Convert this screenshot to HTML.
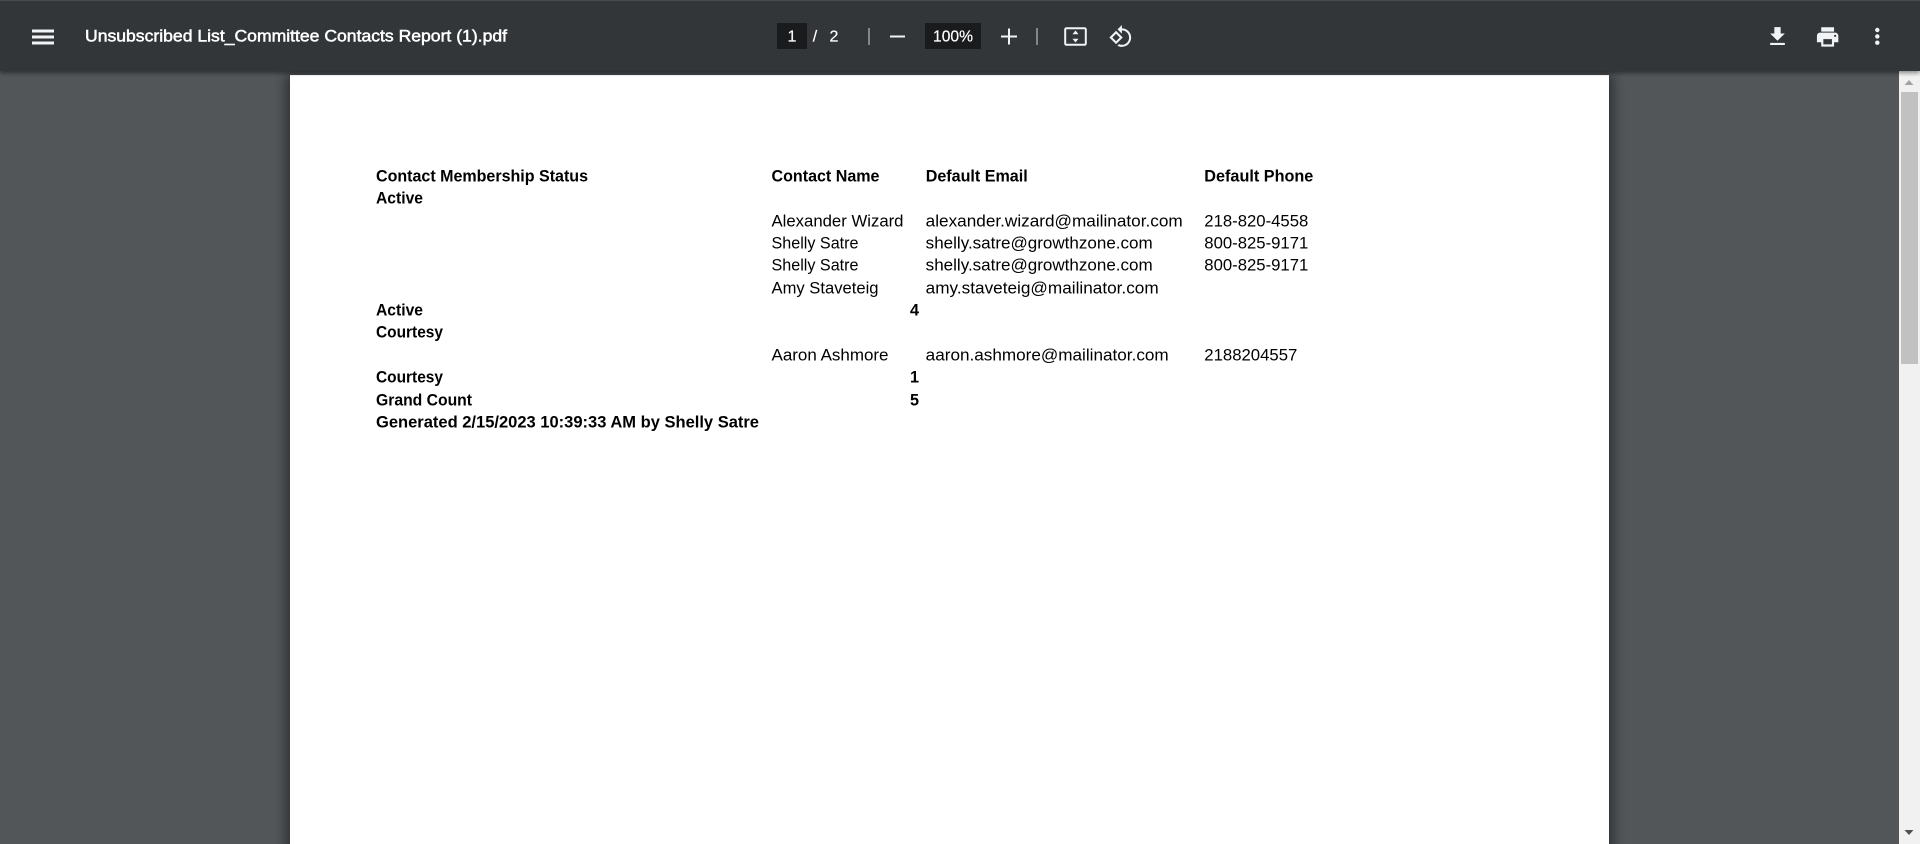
<!DOCTYPE html>
<html><head><meta charset="utf-8"><title>Unsubscribed List_Committee Contacts Report (1).pdf</title>
<style>
html,body{margin:0;padding:0;width:1920px;height:844px;overflow:hidden;background:#525659}
svg{position:absolute;left:0;top:0;display:block}
.d{font-family:"Liberation Sans",sans-serif;font-size:16.2px;fill:#000}
.b{font-weight:bold}
.t{font-family:"Liberation Sans",sans-serif;fill:#fff}
</style></head><body>
<svg width="1920" height="844" viewBox="0 0 1920 844" xmlns="http://www.w3.org/2000/svg">
<defs>
<filter id="ps" x="-5%" y="-5%" width="110%" height="110%"><feGaussianBlur stdDeviation="6"/></filter>
<filter id="ts" x="-5%" y="-50%" width="110%" height="200%"><feGaussianBlur stdDeviation="2.5"/></filter>
</defs>
<rect width="1920" height="844" fill="#525659"/>
<rect x="286" y="75" width="1327" height="800" fill="#000" opacity=".45" filter="url(#ps)"/>
<rect x="290" y="75" width="1319" height="769" fill="#fff"/>
<!-- scrollbar -->
<rect x="1899" y="71" width="21" height="773" fill="#f1f1f1"/>
<rect x="1901" y="92" width="17" height="272" fill="#c1c1c1"/>
<path d="M1904.5 85h9l-4.5-5z" fill="#a3a3a3"/>
<path d="M1904.5 830h9l-4.500 5z" fill="#505050"/>
<!-- toolbar -->
<rect x="0" y="66" width="1920" height="7" fill="#000" opacity=".45" filter="url(#ts)"/>
<rect width="1920" height="71" fill="#323639"/>
<rect width="1920" height="1" fill="#4b4b4b"/>
<path d="M32 29.500h22v3H32zM32 35.500h22v3H32zM32 41.500h22v3H32z" fill="#f1f3f4"/>
<text class="t" x="85" y="41.500" font-size="16.500px" stroke="#fff" stroke-width=".5" textLength="422" lengthAdjust="spacingAndGlyphs">Unsubscribed List_Committee Contacts Report (1).pdf</text>
<rect x="777" y="23" width="30" height="26" fill="#191b1c"/>
<text class="t" x="792" y="41.500" font-size="16px" stroke="#fff" stroke-width=".2" text-anchor="middle">1</text>
<text class="t" x="815" y="41.500" font-size="16px" stroke="#fff" stroke-width=".2" text-anchor="middle">/</text>
<text class="t" x="834" y="41.500" font-size="16px" stroke="#fff" stroke-width=".2" text-anchor="middle">2</text>
<rect x="868" y="28" width="2" height="17" fill="#80868b"/>
<rect x="890" y="35.500" width="15" height="2" fill="#f1f3f4"/>
<rect x="925" y="23" width="56" height="26" fill="#191b1c"/>
<text class="t" x="933" y="41.500" font-size="16px" stroke="#fff" stroke-width=".2" textLength="40" lengthAdjust="spacingAndGlyphs">100%</text>
<path d="M1001 35.500h7v-7h2v7h7v2h-7v7h-2v-7h-7z" fill="#f1f3f4"/>
<rect x="1036" y="28" width="2" height="17" fill="#80868b"/>
<!-- fit -->
<rect x="1065.200" y="28.200" width="20.600" height="16.600" rx="1.200" fill="none" stroke="#f1f3f4" stroke-width="2"/>
<path d="M1075.500 30.500l3 3.800h-6zM1075.500 42.500l3-3.800h-6z" fill="#f1f3f4"/>
<!-- rotate -->
<g transform="translate(1108.500 24.200) scale(1.03)" fill="#f1f3f4"><path d="M7.340 6.410L.86 12.900l6.490 6.480 6.490-6.480-6.500-6.490zM3.690 12.900l3.660-3.660L11 12.900l-3.660 3.660-3.650-3.660zm15.670-6.260C17.610 4.880 15.300 4 13 4V.76L8.760 5 13 9.240V6c1.790 0 3.580.68 4.950 2.050 2.730 2.730 2.730 7.170 0 9.900C16.580 19.320 14.790 20 13 20c-.97 0-1.940-.21-2.840-.61l-1.490 1.490C10.020 21.620 11.510 22 13 22c2.300 0 4.610-.88 6.360-2.640 3.520-3.510 3.520-9.210 0-12.720z"/></g>
<!-- download -->
<g transform="translate(1764.900 24) scale(1.050)" fill="#f1f3f4"><path d="M19 9h-4V3H9v6H5l7 7 7-7zM5 18v2h14v-2H5z"/></g>
<!-- print -->
<g transform="translate(1814.800 24.100) scale(1.070)" fill="#f1f3f4"><path d="M19 8H5c-1.660 0-3 1.340-3 3v6h4v4h12v-4h4v-6c0-1.660-1.340-3-3-3zm-3 11H8v-5h8v5zm3-7c-.55 0-1-.45-1-1s.45-1 1-1 1 .45 1 1-.45 1-1 1zm-1-9H6v4h12V3z"/></g>
<!-- more -->
<g fill="#f1f3f4"><circle cx="1877.300" cy="30" r="2.200"/><circle cx="1877.300" cy="36.400" r="2.200"/><circle cx="1877.300" cy="42.700" r="2.200"/></g>
<!-- document -->
<g class="d">
<text class="d b" x="376" y="181.700" textLength="212" lengthAdjust="spacingAndGlyphs">Contact Membership Status</text>
<text class="d b" x="771.500" y="181.700" textLength="108" lengthAdjust="spacingAndGlyphs">Contact Name</text>
<text class="d b" x="925.700" y="181.700" textLength="102" lengthAdjust="spacingAndGlyphs">Default Email</text>
<text class="d b" x="1204.300" y="181.700" textLength="109" lengthAdjust="spacingAndGlyphs">Default Phone</text>
<text class="d b" x="376" y="203.700" textLength="47" lengthAdjust="spacingAndGlyphs">Active</text>
<text class="d" x="771.500" y="226.400" textLength="132" lengthAdjust="spacingAndGlyphs">Alexander Wizard</text>
<text class="d" x="925.700" y="226.400" textLength="257" lengthAdjust="spacingAndGlyphs">alexander.wizard@mailinator.com</text>
<text class="d" x="1204.300" y="226.400" textLength="104" lengthAdjust="spacingAndGlyphs">218-820-4558</text>
<text class="d" x="771.500" y="248.700" textLength="87" lengthAdjust="spacingAndGlyphs">Shelly Satre</text>
<text class="d" x="925.700" y="248.700" textLength="227" lengthAdjust="spacingAndGlyphs">shelly.satre@growthzone.com</text>
<text class="d" x="1204.300" y="248.700" textLength="104" lengthAdjust="spacingAndGlyphs">800-825-9171</text>
<text class="d" x="771.500" y="270.700" textLength="87" lengthAdjust="spacingAndGlyphs">Shelly Satre</text>
<text class="d" x="925.700" y="270.700" textLength="227" lengthAdjust="spacingAndGlyphs">shelly.satre@growthzone.com</text>
<text class="d" x="1204.300" y="270.700" textLength="104" lengthAdjust="spacingAndGlyphs">800-825-9171</text>
<text class="d" x="771.500" y="293.700" textLength="107" lengthAdjust="spacingAndGlyphs">Amy Staveteig</text>
<text class="d" x="925.700" y="293.700" textLength="233" lengthAdjust="spacingAndGlyphs">amy.staveteig@mailinator.com</text>
<text class="d b" x="376" y="315.700" textLength="47" lengthAdjust="spacingAndGlyphs">Active</text>
<text class="d b" x="919" y="315.700" text-anchor="end">4</text>
<text class="d b" x="376" y="337.700" textLength="67" lengthAdjust="spacingAndGlyphs">Courtesy</text>
<text class="d" x="771.500" y="360.700" textLength="117" lengthAdjust="spacingAndGlyphs">Aaron Ashmore</text>
<text class="d" x="925.700" y="360.700" textLength="243" lengthAdjust="spacingAndGlyphs">aaron.ashmore@mailinator.com</text>
<text class="d" x="1204.300" y="360.700" textLength="93" lengthAdjust="spacingAndGlyphs">2188204557</text>
<text class="d b" x="376" y="382.700" textLength="67" lengthAdjust="spacingAndGlyphs">Courtesy</text>
<text class="d b" x="919" y="382.700" text-anchor="end">1</text>
<text class="d b" x="376" y="405.700" textLength="96" lengthAdjust="spacingAndGlyphs">Grand Count</text>
<text class="d b" x="919" y="405.700" text-anchor="end">5</text>
<text class="d b" x="376" y="427.700" textLength="383" lengthAdjust="spacingAndGlyphs">Generated 2/15/2023 10:39:33 AM by Shelly Satre</text>
</g>
</svg>
</body></html>
